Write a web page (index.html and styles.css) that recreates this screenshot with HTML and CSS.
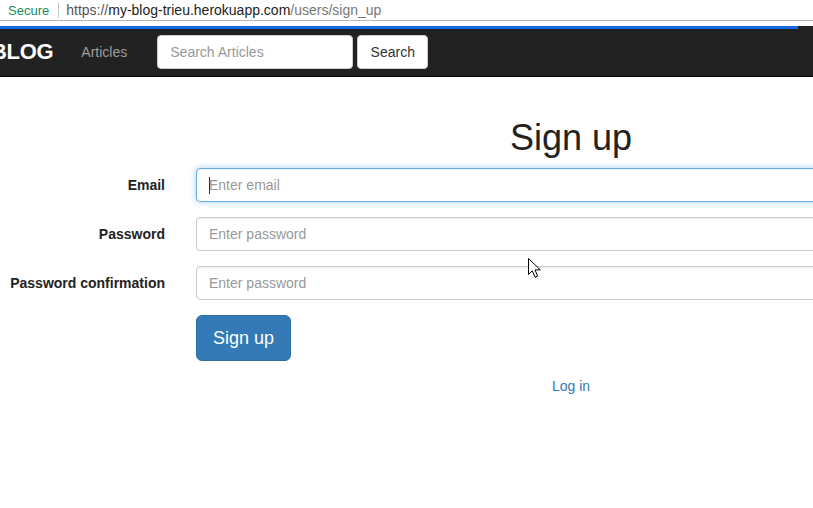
FILE: index.html
```html
<!DOCTYPE html>
<html>
<head>
<meta charset="utf-8">
<title>Sign up</title>
<link rel="stylesheet" href="styles.css">
</head>
<body>
<div class="addressbar">
  <span class="secure">Secure</span>
  <span class="sep"></span>
  <span class="url"><span class="scheme">https://</span><span class="host">my-blog-trieu.herokuapp.com</span><span class="path">/users/sign_up</span></span>
</div>
<div class="gap"></div>
<nav class="navbar">
  <div class="loadbar"></div>
  <a class="brand">BLOG</a>
  <a class="navlink">Articles</a>
  <form class="navform">
    <input class="navsearch" type="text" placeholder="Search Articles">
    <button class="navbtn" type="button">Search</button>
  </form>
</nav>
<main class="page">
  <h1 class="title">Sign up</h1>
  <form class="form">
    <label class="label">Email</label>
    <div class="fieldwrap"><input class="field focused" type="text" placeholder="Enter email"><span class="caret"></span></div>
    <label class="label">Password</label>
    <input class="field" type="password" placeholder="Enter password">
    <label class="label">Password confirmation</label>
    <input class="field" type="password" placeholder="Enter password">
    <span></span>
    <div><button class="submit" type="button">Sign up</button></div>
  </form>
  <div class="login"><a class="loginlink">Log in</a></div>
</main>
<svg class="cursor" width="14" height="21" viewBox="0 0 14 21">
  <path d="M0.5 0.5 L0.5 16.5 L4.3 12.8 L7 19.2 L9.6 18.1 L7 11.9 L12.3 11.9 Z" fill="#fff" stroke="#000" stroke-width="1" stroke-linejoin="miter"/>
</svg>
</body>
</html>
```
FILE: styles.css
```css
html, body {
  margin: 0;
  padding: 0;
  background: #fff;
  overflow: hidden;
  width: 813px;
  height: 508px;
  font-family: "Liberation Sans", Arial, sans-serif;
  color: #333;
}
.addressbar {
  height: 20px;
  border-bottom: 1px solid #b4b4b4;
  display: flex;
  align-items: center;
  padding-left: 8px;
  white-space: nowrap;
}
.secure {
  color: #1a8a5f;
  font-size: 13px;
}
.sep {
  width: 1px;
  height: 15px;
  background: #c6c6c6;
  margin: 0 7px 0 9px;
}
.url {
  font-size: 14px;
}
.scheme { color: #555; }
.host { color: #222; }
.path { color: #777; }
.gap {
  height: 5px;
}
.navbar {
  position: relative;
  height: 50px;
  background: #222;
  border-bottom: 1px solid #080808;
  display: flex;
  align-items: center;
  white-space: nowrap;
}
.loadbar {
  position: absolute;
  left: 0;
  top: 0;
  width: 798px;
  height: 3px;
  background: #1669e0;
}
.brand {
  color: #fff;
  font-weight: bold;
  font-size: 22px;
  margin-left: -9px;
  letter-spacing: -0.3px;
  margin-top: 1px;
}
.navlink {
  color: #9d9d9d;
  font-size: 14px;
  margin-left: 28px;
  margin-top: 1px;
}
.navform {
  display: flex;
  margin-left: 30px;
  margin-top: 1px;
  gap: 4px;
}
.navsearch {
  box-sizing: border-box;
  width: 196px;
  height: 34px;
  border: 1px solid #ccc;
  border-radius: 4px;
  padding: 6px 12px;
  font-family: inherit;
  font-size: 14px;
  color: #555;
  background: #fff;
  outline: none;
}
.navsearch::placeholder { color: #999; }
.navbtn {
  box-sizing: border-box;
  width: 71px;
  height: 34px;
  border: 1px solid #ccc;
  border-radius: 4px;
  background: #fff;
  color: #333;
  font-family: inherit;
  font-size: 14px;
  padding: 0;
}
.page {
  width: 1142px;
}
.title {
  text-align: center;
  font-weight: 500;
  font-size: 36px;
  margin: 41px 0 10px;
  line-height: 40px;
  color: #222;
}
.form {
  display: grid;
  grid-template-columns: 165px 800px;
  column-gap: 31px;
  row-gap: 15px;
  align-items: center;
}
.label {
  text-align: right;
  font-weight: bold;
  font-size: 14px;
  color: #222;
  white-space: nowrap;
}
.fieldwrap {
  position: relative;
  height: 34px;
}
.caret {
  position: absolute;
  width: 1px;
  height: 17px;
  background: #333;
  left: 13px;
  top: 9px;
}
.field {
  box-sizing: border-box;
  height: 34px;
  width: 800px;
  border: 1px solid #ccc;
  border-radius: 4px;
  padding: 6px 12px;
  font-family: inherit;
  font-size: 14px;
  color: #555;
  outline: none;
  box-shadow: inset 0 1px 1px rgba(0,0,0,0.075);
  display: block;
}
.field::placeholder { color: #999; }
.field.focused {
  border-color: #66afe9;
  box-shadow: inset 0 1px 1px rgba(0,0,0,0.075), 0 0 6px rgba(102,175,233,0.6);
}
.submit {
  box-sizing: border-box;
  height: 46px;
  width: 95px;
  background: #337ab7;
  border: 1px solid #2e6da4;
  border-radius: 6px;
  color: #fff;
  font-family: inherit;
  font-size: 18px;
  padding: 0;
}
.login {
  text-align: center;
  margin-top: 17px;
  font-size: 14px;
}
.loginlink {
  color: #337ab7;
}
.cursor {
  position: absolute;
  left: 528px;
  top: 258px;
}
```
